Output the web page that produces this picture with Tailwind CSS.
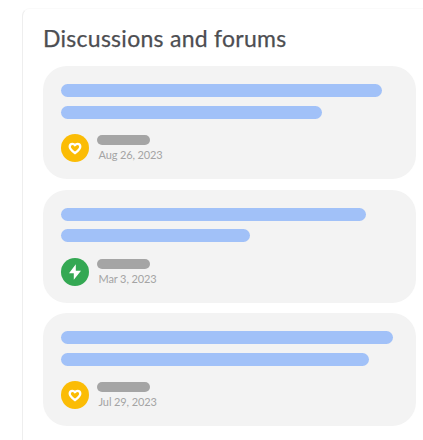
<!DOCTYPE html>
<html lang="en">
<head>
<meta charset="utf-8">
<title>Discussions and forums</title>
<script src="https://cdn.jsdelivr.net/npm/@tailwindcss/browser@4"></script>
</head>
<body class="h-[440px] w-[423px] overflow-hidden bg-white pl-[22px] pt-2 font-['Lato',sans-serif]">
<main class="h-[432px] w-[401px] rounded-tl-lg border-l border-t border-l-[#eeeeee] border-t-[#fafafa] pl-5 pt-[13px]">
  <h1 class="h-11 whitespace-nowrap text-[23px] leading-[32px] font-normal tracking-[0.27px] text-[#4d4e52] [-webkit-text-stroke:0.25px_#4d4e52]">Discussions and forums</h1>
  <div class="flex w-[373px] flex-col gap-[10.5px]">
    <article class="h-[113px] rounded-[24px] bg-[#f3f3f3] pl-[17.5px] pt-[18px]">
      <div class="h-[13px] w-[321.5px] rounded-full bg-[#a1c1f8]"></div>
      <div class="mt-[8.5px] h-[13px] w-[261.5px] rounded-full bg-[#a1c1f8]"></div>
      <div class="mt-[15.5px] flex">
        <svg class="ml-[0.5px] h-7 w-7" viewBox="0 0 28 28"><circle cx="14" cy="14" r="14" fill="#fbbc05"/><path d="M14 19.2C10.8 16.6 8.7 14.9 8.7 12.7C8.7 11 10 9.9 11.5 9.9C12.5 9.9 13.4 10.4 14 11.2C14.6 10.4 15.5 9.9 16.5 9.9C18 9.9 19.3 11 19.3 12.7C19.3 14.9 17.2 16.6 14 19.2Z" fill="none" stroke="#fff" stroke-width="2.3" stroke-linejoin="round"/></svg>
        <div class="pl-2 pt-px"><div class="h-[10px] w-[53px] rounded-full bg-[#a5a5a5]"></div><p class="pl-[1.5px] pt-[3px] text-[11px] leading-[14px] tracking-[-0.12px] whitespace-nowrap text-[#a4a4a4]">Aug 26, 2023</p></div>
      </div>
    </article>
    <article class="h-[113px] rounded-[24px] bg-[#f3f3f3] pl-[17.5px] pt-[18px]">
      <div class="h-[13px] w-[305px] rounded-full bg-[#a1c1f8]"></div>
      <div class="mt-[8.5px] h-[13px] w-[189.5px] rounded-full bg-[#a1c1f8]"></div>
      <div class="mt-[15.5px] flex">
        <svg class="ml-[0.5px] h-7 w-7" viewBox="0 0 28 28"><circle cx="14" cy="14" r="14" fill="#34a853"/><path d="M14.8 6.3L8 15.2H12.8V21.8L20 12.8H14.8Z" fill="#fff"/></svg>
        <div class="pl-2 pt-px"><div class="h-[10px] w-[53px] rounded-full bg-[#a5a5a5]"></div><p class="pl-[1.5px] pt-[3px] text-[11px] leading-[14px] tracking-[-0.12px] whitespace-nowrap text-[#a4a4a4]">Mar 3, 2023</p></div>
      </div>
    </article>
    <article class="h-[113px] rounded-[24px] bg-[#f3f3f3] pl-[17.5px] pt-[18px]">
      <div class="h-[13px] w-[332.5px] rounded-full bg-[#a1c1f8]"></div>
      <div class="mt-[8.5px] h-[13px] w-[308.5px] rounded-full bg-[#a1c1f8]"></div>
      <div class="mt-[15.5px] flex">
        <svg class="ml-[0.5px] h-7 w-7" viewBox="0 0 28 28"><circle cx="14" cy="14" r="14" fill="#fbbc05"/><path d="M14 19.2C10.8 16.6 8.7 14.9 8.7 12.7C8.7 11 10 9.9 11.5 9.9C12.5 9.9 13.4 10.4 14 11.2C14.6 10.4 15.5 9.9 16.5 9.9C18 9.9 19.3 11 19.3 12.7C19.3 14.9 17.2 16.6 14 19.2Z" fill="none" stroke="#fff" stroke-width="2.3" stroke-linejoin="round"/></svg>
        <div class="pl-2 pt-px"><div class="h-[10px] w-[53px] rounded-full bg-[#a5a5a5]"></div><p class="pl-[1.5px] pt-[3px] text-[11px] leading-[14px] tracking-[-0.12px] whitespace-nowrap text-[#a4a4a4]">Jul 29, 2023</p></div>
      </div>
    </article>
  </div>
</main>
</body>
</html>
